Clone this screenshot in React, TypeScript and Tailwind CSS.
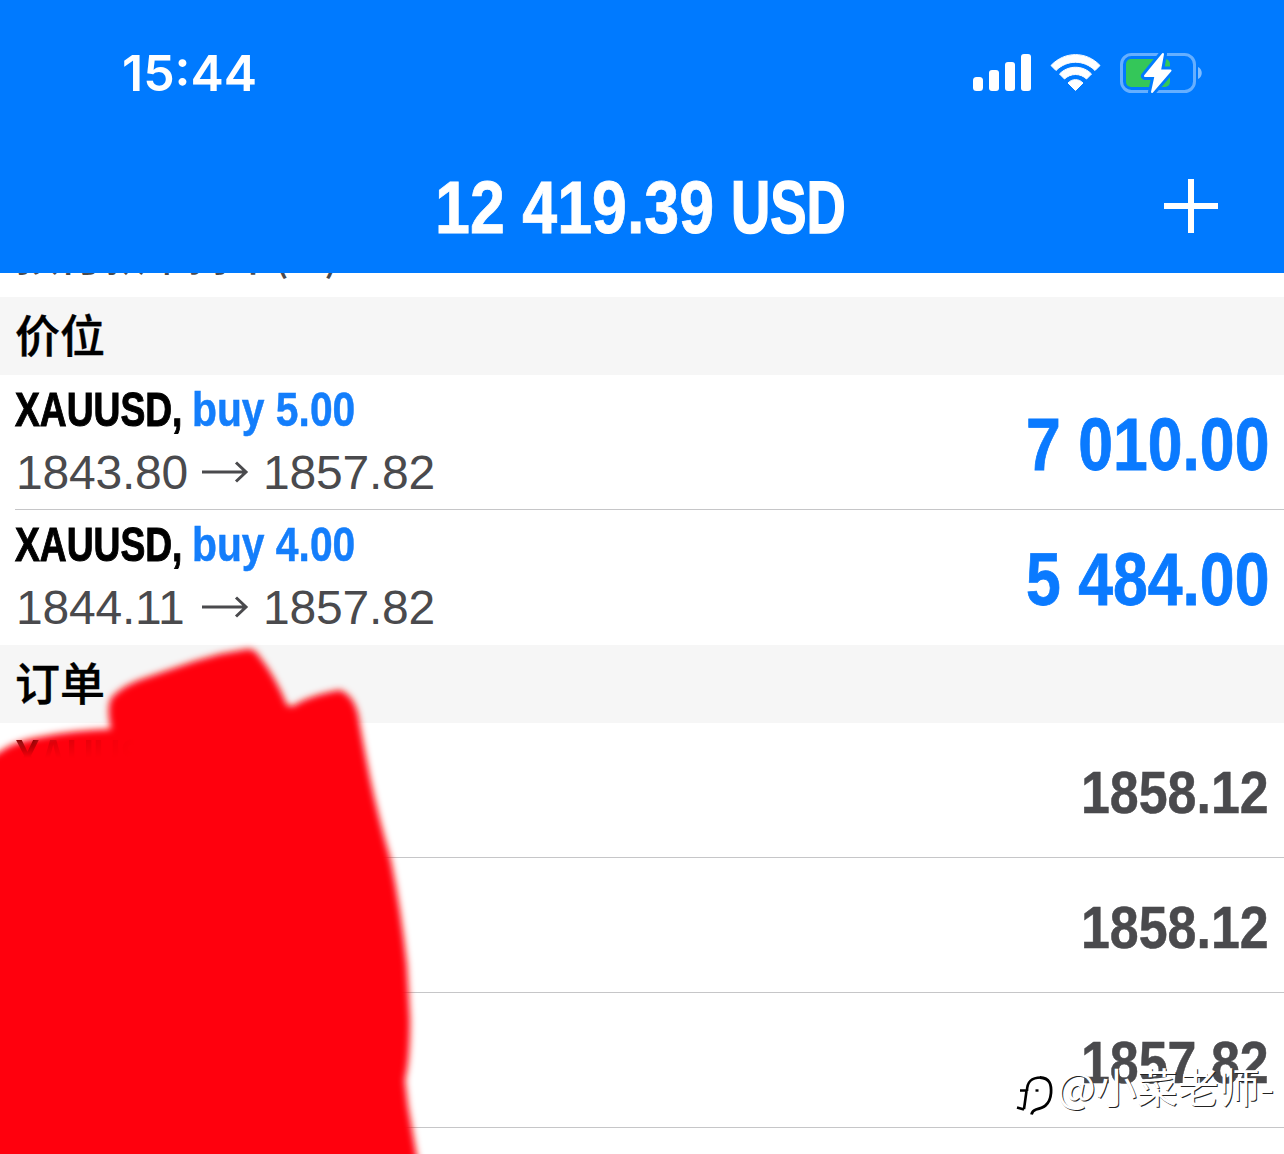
import type { ReactNode } from "react";
import { clsx } from "clsx";

const positions = [
  { symbol: "XAUUSD,", side: "buy 5.00", open: "1843.80", current: "1857.82", profit: "7 010.00" },
  { symbol: "XAUUSD,", side: "buy 4.00", open: "1844.11", current: "1857.82", profit: "5 484.00" },
];

const orders = [
  { symbol: "XAUUSD,", price: "1858.12" },
  { symbol: "", price: "1858.12" },
  { symbol: "", price: "1857.82" },
];

// Bold text squeezed horizontally, the outer box keeps the squeezed width
function Condensed({ box, scale, children }: { box: string; scale: string; children: ReactNode }) {
  return (
    <span className={clsx("block shrink-0 font-bold whitespace-pre", box)}>
      <span className={clsx("inline-block origin-left", scale)}>{children}</span>
    </span>
  );
}

function StatusBar() {
  return (
    <div className="flex h-[146px] items-center justify-between pr-20 pl-[122px] text-white">
      <div className="font-['Inter',sans-serif] text-[50px] leading-none font-semibold">15:44</div>
      <div className="flex items-center">
        <svg width="60" height="40" viewBox="0 0 60 40" fill="currentColor">
          <rect x="1" y="24" width="10" height="14" rx="3.500" />
          <rect x="17" y="17" width="10" height="21" rx="3" />
          <rect x="33" y="9" width="10" height="29" rx="3" />
          <rect x="49" y="1" width="10" height="37" rx="3" />
        </svg>
        <svg className="ml-[18px]" width="52" height="40" viewBox="0 0 52 40" fill="currentColor" stroke="currentColor" strokeLinejoin="round">
          <path d="M1 12.500C14.500-2 36.500-2 50 12.500L45 17.500C34 6.500 17 6.500 6 17.500Z" />
          <path d="M9.500 21C18 12 33 12 41.500 21L36.500 26C30.500 20 20.500 20 14.500 26Z" />
          <path d="M18 30C22 25.500 29 25.500 33 30L25.500 37.500Z" />
        </svg>
        <svg className="ml-[18px]" width="84" height="44" viewBox="0 0 84 44" fill="none">
          <rect x="1.500" y="3.500" width="73" height="37" rx="10" stroke="#fff" strokeOpacity=".4" strokeWidth="3" />
          <path d="M78 16c5 2 5 10 0 12z" fill="#fff" fillOpacity=".5" />
          <rect x="6" y="8" width="44" height="28" rx="5" fill="#34c759" />
          <path d="M43 3 25 25h10.500L32 41 50.500 19.500H40z" stroke="#007aff" strokeWidth="8" strokeLinejoin="round" />
          <path d="M43 3 25 25h10.500L32 41 50.500 19.500H40z" fill="#fff" stroke="#fff" strokeWidth="2" strokeLinejoin="round" />
        </svg>
      </div>
    </div>
  );
}

function SectionTitle({ children }: { children: ReactNode }) {
  return (
    <h2 className="flex h-[78px] items-center bg-[#f6f6f6] pb-1.5 pl-[15px] font-['Noto_Sans_CJK_SC',sans-serif] text-[45px] leading-none font-medium [-webkit-text-stroke:0.4px_#000]">
      {children}
    </h2>
  );
}

function Arrow() {
  return (
    <svg className="mx-[14px]" width="47" height="24" viewBox="0 0 47 24" fill="none" stroke="currentColor" strokeWidth="3">
      <path d="M0 11h44M34 1.500 44 11 34 20.500" />
    </svg>
  );
}

// Brush strokes hiding the pending orders
function Scribble() {
  return (
    <svg className="pointer-events-none absolute top-[640px] left-0" width="440" height="514" viewBox="0 0 440 514">
      <defs>
        <filter id="soft" x="-5%" y="-5%" width="110%" height="110%">
          <feGaussianBlur stdDeviation="3.500" />
        </filter>
      </defs>
      <path
        d="M-20 122 L0 112 Q12 102 40 97 Q75 90 111 89 Q106 66 112 57 Q125 44 145 38 L195 21 L220 14 L248 9 Q255 9 259 16 Q275 36 287 65 Q293 68 298 63 Q315 54 340 50 Q353 55 358 74 Q362 98 370 138 Q378 176 391 221 Q401 270 407 325 L410 380 Q410 420 405 440 L408 466 L420 534 L-20 534 Z"
        fill="#ff0008"
        filter="url(#soft)"
      />
    </svg>
  );
}

function Watermark() {
  return (
    <div className="absolute top-[1060px] left-[1016px] z-20 flex items-start text-white">
      <svg width="41" height="56" viewBox="0 0 41 56" fill="none" stroke="#000">
        <path d="M4 30.500H11.500M10.500 31 8 49M1 47.500 8 49.500M11 31C11 22 15 17.500 25 17.500" strokeWidth="2.600" />
        <path d="M19.500 30.500h3" strokeWidth="2.400" />
        <path d="M24 17.500C34 18 35.500 25 35 33C34 46 26 48 20 49.500C17 50.500 16 52 15.500 54.500" strokeWidth="2.800" />
      </svg>
      <span className="-mt-0.5 font-['Noto_Sans_CJK_SC',sans-serif] text-[41px] leading-[54px] font-normal whitespace-nowrap [text-shadow:1px_1px_0_#222]">
        @小菜老师-
      </span>
    </div>
  );
}

export default function App() {
  return (
    <div className="relative h-[1154px] w-[1284px] overflow-hidden bg-white font-['Liberation_Sans',Arial,sans-serif] text-black">
      <header className="h-[273px] bg-[#007aff]">
        <StatusBar />
        <div className="flex h-[123px] items-center pr-[66px] pl-[435px] text-white">
          <div className="flex text-[74px] leading-[84px]">
            <Condensed box="w-[296px] [-webkit-text-stroke:0.8px_#fff]" scale="scale-x-[.848]">12 419.39</Condensed>
            <Condensed box="w-[116px] [-webkit-text-stroke:1.5px_#fff]" scale="scale-x-[.735]">USD</Condensed>
          </div>
          <svg className="mb-[3px] ml-auto" width="54" height="54" viewBox="0 0 54 54" stroke="currentColor" strokeWidth="6">
            <path d="M27 0v54M0 27h54" />
          </svg>
        </div>
      </header>

      <div className="flex h-6 items-end overflow-hidden pl-[15px] font-['Noto_Sans_CJK_SC',sans-serif] text-[44px] leading-none font-medium text-[#4a4a4d]">
        <span className="mb-[23px] tracking-[-0.8px] whitespace-pre">
          预付款维持率<span className="text-[40px]">(%)</span>
        </span>
      </div>

      <SectionTitle>价位</SectionTitle>
      <ul className="pl-[15px]">
        {positions.map((p, i) => (
          <li
            key={p.side}
            className={clsx("flex h-[135px] items-center justify-between border-b pr-[14px]", i === 0 ? "border-[#c6c6c8]" : "border-transparent")}
          >
            <div>
              <div className="-mt-px mb-px flex text-[48px] leading-[62px]">
                <Condensed box="w-[177px] [-webkit-text-stroke:1px_#000]" scale="scale-x-[.775]">{p.symbol}</Condensed>
                <Condensed box="w-[170px] text-[#147efb] [-webkit-text-stroke:0.5px_#147efb]" scale="scale-x-[.85]">{p.side}</Condensed>
              </div>
              <div className="flex items-center pl-px text-[48px] leading-[62px] tracking-[-0.2px] text-[#4a4a4d]">
                <span className="w-[172px]">{p.open}</span>
                <Arrow />
                {p.current}
              </div>
            </div>
            <div className="pt-1.5 text-[74px] leading-[84px] text-[#0a7aff]">
              <Condensed box="w-[244px] [-webkit-text-stroke:0.8px_#0a7aff]" scale="scale-x-[.845]">{p.profit}</Condensed>
            </div>
          </li>
        ))}
      </ul>

      <SectionTitle>订单</SectionTitle>
      <ul className="pl-[15px]">
        {orders.map((o, i) => (
          <li key={i} className="flex h-[135px] items-center justify-between border-b border-[#c6c6c8] pr-[14px]">
            {/* only the tops of the letters show through the brush */}
            <div className="relative z-10 mb-[66px] flex text-[48px] leading-[62px] text-[#8c0000] mask-intersect [mask-image:linear-gradient(to_bottom,#000_14px,transparent_32px),linear-gradient(to_right,#000_18px,rgba(0,0,0,.35)_30px,transparent_120px)]">
              <Condensed box="w-[175px]" scale="scale-x-[.775]">{o.symbol}</Condensed>
            </div>
            <div className="pt-[5px] text-[60px] leading-[70px] text-[#4a4a4d]">
              <Condensed box="w-[189px] [-webkit-text-stroke:0.5px_#4a4a4d]" scale="scale-x-[.865]">{o.price}</Condensed>
            </div>
          </li>
        ))}
      </ul>

      <Scribble />
      <Watermark />
    </div>
  );
}
